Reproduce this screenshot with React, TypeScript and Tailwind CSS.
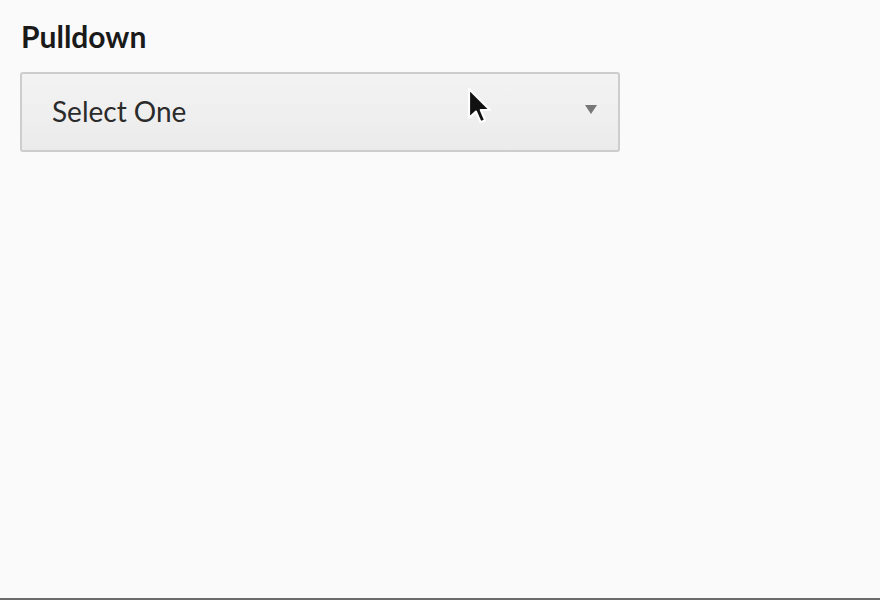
import React from "react";

export default function App() {
  return (
    <div className="relative w-[880px] h-[600px] bg-[#fafafa] border-b-2 border-[#6b6b6b] overflow-hidden" style={{ fontFamily: "Lato, 'Open Sans', sans-serif" }}>
      <div className="pt-[18px] pl-[21px]">
        <h1 className="text-[30px] font-bold text-[#1a1a1a] leading-[36px]">Pulldown</h1>
        <div className="mt-[18px] ml-[-1px] w-[600px] h-[80px] rounded-[3px] border-2 border-[#cdcdcd] bg-gradient-to-b from-[#f3f3f3] to-[#ebebeb] flex items-center justify-between pl-[30px] pr-[21px]">
          <span className="text-[28px] text-[#2b2b2b] leading-none pb-[2px]">Select One</span>
          <svg width="12" height="9" viewBox="0 0 12 9" className="mt-[-6px]">
            <polygon points="0,0 12,0 6,9" fill="#777" />
          </svg>
        </div>
      </div>
      <svg className="absolute left-[466px] top-[87px]" width="26" height="38" viewBox="0 0 13 19">
        <path d="M1.5 1 L1.5 15.5 L5 12.3 L7.3 17.6 L9.6 16.6 L7.4 11.5 L12 11.5 Z" fill="#111" stroke="#fff" strokeWidth="1.1" strokeLinejoin="round" />
      </svg>
    </div>
  );
}
